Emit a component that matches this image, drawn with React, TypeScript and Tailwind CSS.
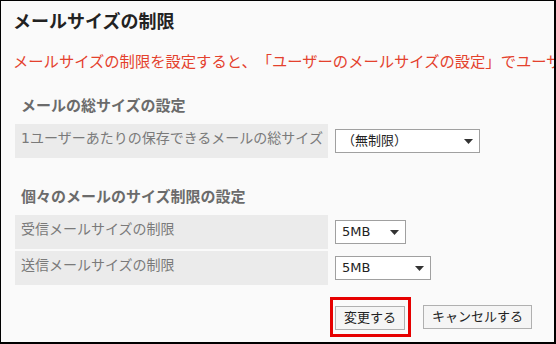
import React from "react";

const Arrow = () => (
    <svg width="9" height="5" viewBox="0 0 9 5" className="shrink-0">
        <path d="M0 0 L9 0 L4.5 5 Z" fill="#333" />
    </svg>
);

const Select = ({ value, width }: { value: string; width: string }) => (
    <div className={`${width} h-[24px] bg-white border border-[#a0a0a0] flex items-center justify-between pl-[6px] pr-[6px] text-[13px] text-[#222]`}>
        <span>{value}</span>
        <Arrow />
    </div>
);

const Row = ({ label, children }: { label: string; children: React.ReactNode }) => (
    <div className="flex items-start">
        <div className="w-[313px] h-[34px] bg-[#ebebeb] pl-[6px] pt-[4px] text-[14px] leading-[20px] text-[#7a7a7a] whitespace-nowrap">
            {label}
        </div>
        <div className="pl-[7px] pt-[5px]">{children}</div>
    </div>
);

const App = () => {
    return (
        <div className="w-[556px] h-[344px] overflow-hidden bg-[#fafafa] border border-black border-r-2 border-b-2 [text-spacing-trim:space-all] font-['DejaVu_Sans','Noto_Sans_CJK_JP',sans-serif]">
            <h1 className="pl-[12px] pt-[8px] text-[18px] leading-[26px] font-bold text-[#222]">メールサイズの制限</h1>

            <p className="mt-[16px] pl-[12px] text-[15.3px] leading-[22px] text-[#e4412d] whitespace-nowrap">
                メールサイズの制限を設定すると、「ユーザーのメールサイズの設定」でユーザー
            </p>

            <div className="pl-[14px]">
                <div className="mt-[23px] pl-[6px] text-[15px] leading-[20px] font-bold text-[#6b6b6b]">メールの総サイズの設定</div>
                <div className="mt-[8px]">
                    <Row label="1ユーザーあたりの保存できるメールの総サイズ">
                        <Select value="（無制限）" width="w-[145px]" />
                    </Row>
                </div>

                <div className="mt-[29px] pl-[6px] text-[15px] leading-[20px] font-bold text-[#6b6b6b]">個々のメールのサイズ制限の設定</div>
                <div className="mt-[8px] flex flex-col gap-[2px]">
                    <Row label="受信メールサイズの制限">
                        <Select value="5MB" width="w-[71px]" />
                    </Row>
                    <Row label="送信メールサイズの制限">
                        <Select value="5MB" width="w-[96px]" />
                    </Row>
                </div>
            </div>

            <div className="flex items-center mt-[12px] ml-[329px]">
                <div className="border-[3px] border-[#e60000] pt-[5px] pb-[4px] pl-[2px] pr-[3px]">
                    <button className="h-[24px] px-[8px] bg-[#f5f5f5] border border-[#b0b0b0] text-[13px] text-[#222]">変更する</button>
                </div>
                <button className="ml-[12px] h-[24px] px-[8px] bg-[#f5f5f5] border border-[#b0b0b0] text-[13px] text-[#222]">キャンセルする</button>
            </div>
        </div>
    );
};

export default App;
